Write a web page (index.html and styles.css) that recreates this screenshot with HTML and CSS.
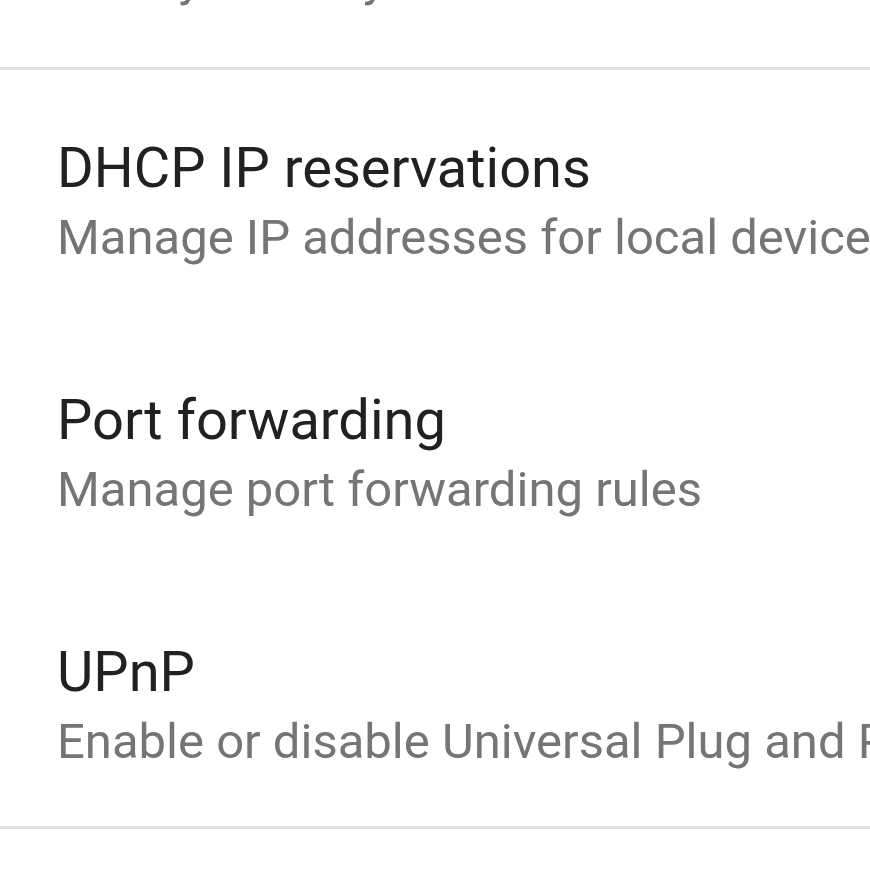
FILE: index.html
```html
<!DOCTYPE html>
<html lang="en">
<head>
<meta charset="utf-8">
<title>Advanced networking</title>
<link rel="stylesheet" href="styles.css">
</head>
<body>
<main class="list">
  <div class="row row--clipped">
    <div class="subtitle">Limit your daily screen time</div>
  </div>
  <hr class="divider">
  <div class="row">
    <div class="title">DHCP IP reservations</div>
    <div class="subtitle">Manage IP addresses for local devices</div>
  </div>
  <div class="row">
    <div class="title">Port forwarding</div>
    <div class="subtitle">Manage port forwarding rules</div>
  </div>
  <div class="row">
    <div class="title">UPnP</div>
    <div class="subtitle">Enable or disable Universal Plug and Play</div>
  </div>
  <hr class="divider">
</main>
</body>
</html>
```

FILE: styles.css
```css
html, body {
  margin: 0;
  padding: 0;
  background: #ffffff;
}

body {
  font-family: Roboto, "Noto Sans", sans-serif;
  overflow: hidden;
}

.list {
  display: flex;
  flex-direction: column;
  width: 870px;
}

.row {
  display: flex;
  flex-direction: column;
  padding: 68px 0 56px 57px;
  white-space: nowrap;
  overflow: hidden;
}

.row--clipped {
  height: 67px;
  box-sizing: border-box;
  padding-top: 0;
  padding-bottom: 60px;
  justify-content: flex-end;
}

.title {
  font-size: 56px;
  line-height: 60px;
  color: #212121;
}

.subtitle {
  font-size: 49px;
  line-height: 56px;
  margin-top: 12px;
  color: #757575;
}

.row--clipped .subtitle {
  margin-top: 0;
  flex-shrink: 0;
}

.divider {
  margin: 0;
  border: 0;
  height: 3px;
  background: #e0e0e0;
}
```
